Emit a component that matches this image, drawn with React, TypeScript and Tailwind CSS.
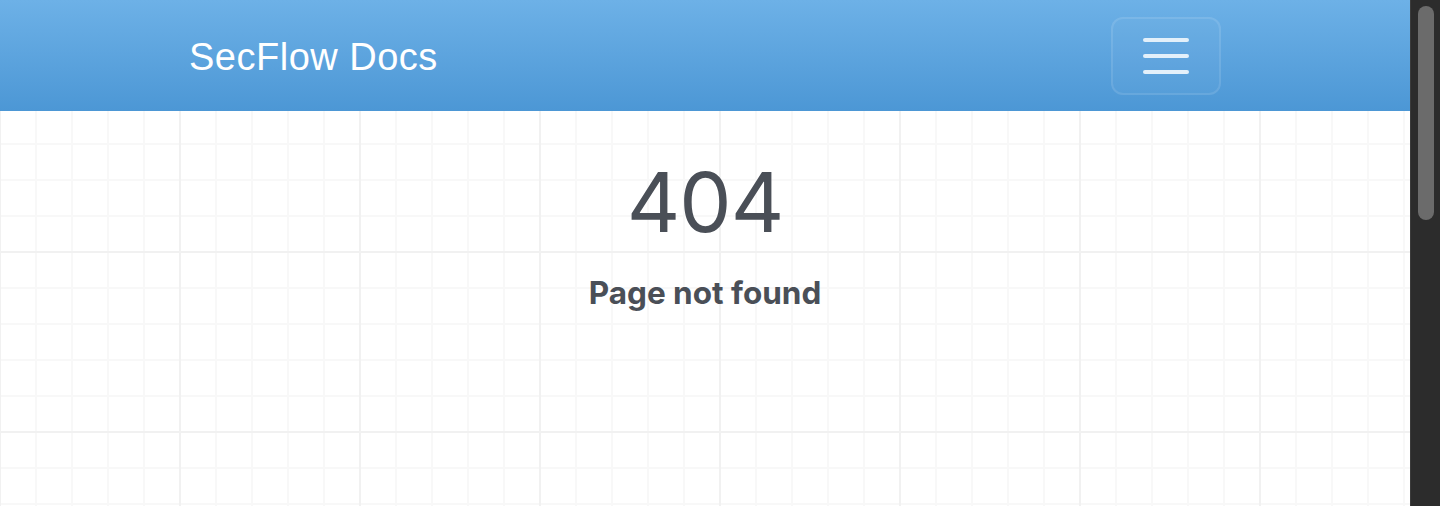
import React from "react";

const Header: React.FC = () => {
  return (
    <header className="h-[111px] w-full bg-gradient-to-b from-[#6db1e7] to-[#4c97d5]">
      <div className="mx-auto flex h-full max-w-[1032px] items-center justify-between">
        <a
          href="#"
          className="pt-[3px] font-['Liberation_Sans',Arial,sans-serif] text-[38px] leading-none tracking-[0.5px] text-white"
        >
          SecFlow Docs
        </a>
        <button
          type="button"
          aria-label="Toggle navigation"
          className="flex h-[78px] w-[110px] flex-col items-center justify-center gap-3 rounded-xl border-2 border-white/10 bg-white/[0.03]"
        >
          <span className="block h-1 w-[46px] rounded-full bg-[#e3f0fa]" />
          <span className="block h-1 w-[46px] rounded-full bg-[#e3f0fa]" />
          <span className="block h-1 w-[46px] rounded-full bg-[#e3f0fa]" />
        </button>
      </div>
    </header>
  );
};

const NotFound: React.FC = () => {
  return (
    <main className="flex flex-col items-center pt-[50px] font-['Inter',sans-serif] text-[#4a4f57]">
      <h1 className="text-[83px] font-normal leading-none tracking-[-1px]">404</h1>
      <p className="mt-[33px] text-[31.5px] font-bold leading-none">
        Page not found
      </p>
    </main>
  );
};

const Scrollbar: React.FC = () => {
  return (
    <div className="h-full w-[30px] shrink-0 border-l border-[#3b3b3b] bg-[#2c2c2c] pl-[7px] pt-[6px]">
      <div className="h-[214px] w-[16px] rounded-full bg-[#6b6b6b]" />
    </div>
  );
};

export default function App() {
  return (
    <div className="flex h-[506px] w-full overflow-hidden bg-white">
      <div className="relative min-w-0 flex-1 bg-[linear-gradient(to_right,#f1f1f1_2px,transparent_2px),linear-gradient(to_bottom,#f1f1f1_2px,transparent_2px),linear-gradient(to_right,#f8f8f8_2px,transparent_2px),linear-gradient(to_bottom,#f8f8f8_2px,transparent_2px)] bg-[size:180px_180px,180px_180px,36px_36px,36px_36px] bg-[position:-1px_71px,-1px_71px,-1px_-1px,-1px_-1px]">
        <Header />
        <NotFound />
      </div>
      <Scrollbar />
    </div>
  );
}
